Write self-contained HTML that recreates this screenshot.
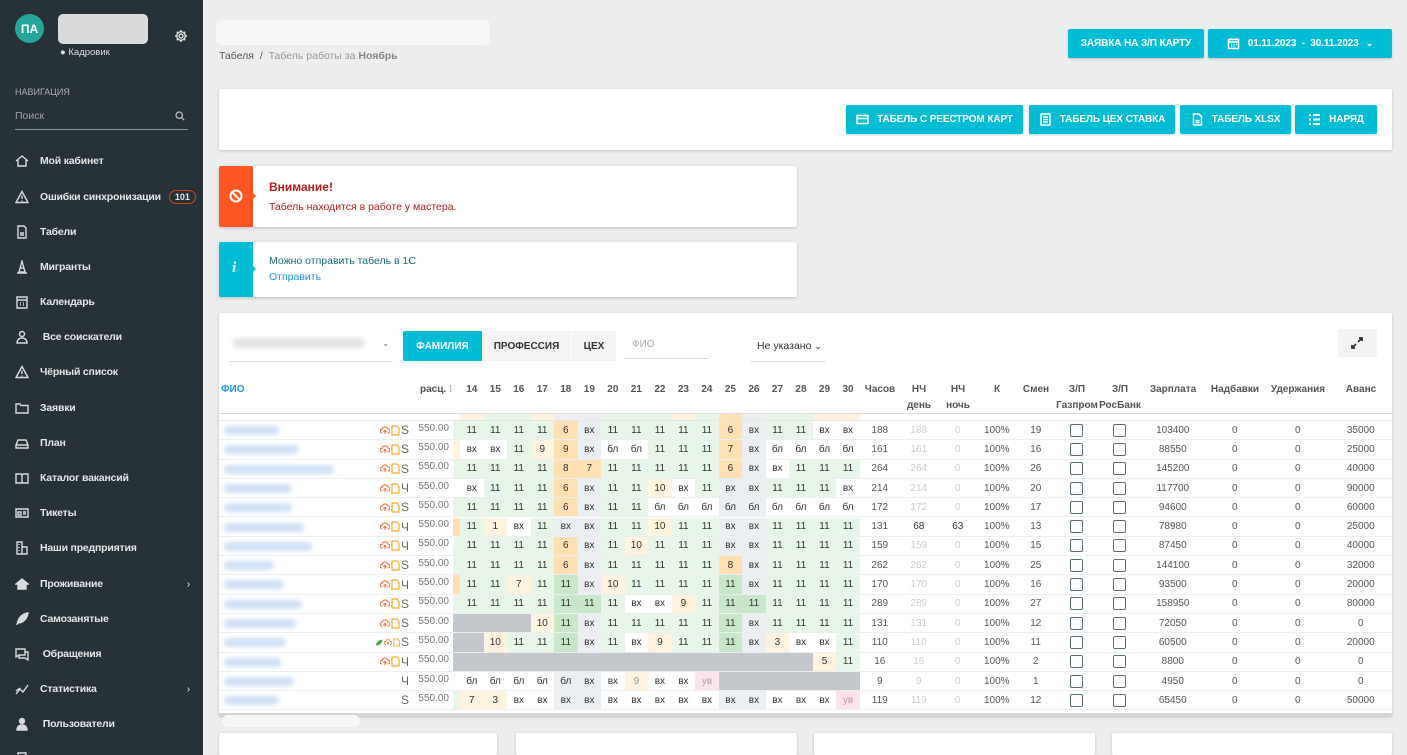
<!DOCTYPE html>
<html><head><meta charset="utf-8">
<style>
*{box-sizing:border-box;margin:0;padding:0}
html{width:1407px;height:755px;overflow:hidden}
body{width:1407px;height:755px;overflow:hidden;background:#eeedee;font-family:"Liberation Sans",sans-serif;position:relative;font-size:11px;color:#333}
.sb{position:absolute;left:0;top:0;width:203px;height:755px;background:#263238;color:#e6e6e6}
.sb .it{position:absolute;left:15px;font-size:10.5px;letter-spacing:-0.2px;white-space:nowrap;font-weight:bold;color:#e4e6e7;display:flex;align-items:center;height:16px}
.sb .it svg{width:14px;height:14px;margin-right:11px;fill:none;stroke:#d8dadb;stroke-width:1.4;flex:none}
.abs{position:absolute}
.btn{position:absolute;background:#00bcd4;color:#fff;font-weight:bold;font-size:10px;letter-spacing:-0.1px;white-space:nowrap;border-radius:2px;display:flex;align-items:center;justify-content:center;box-shadow:0 1px 2px rgba(0,0,0,.2)}
.btn svg{width:13px;height:13px;margin-right:8px;fill:none;stroke:#fff;stroke-width:1.5}
.card{position:absolute;background:#fff;border-radius:2px;box-shadow:0 1px 3px rgba(0,0,0,.2)}
.row{position:absolute;left:219px;width:1173px;height:19.3px;display:flex;align-items:stretch;border-bottom:1px solid #eceeef;font-size:10px}
.row span{display:flex;align-items:center;justify-content:center}
.nm{width:156px;position:relative}
.nm::after{content:"";position:absolute;left:5px;top:5px;height:9px;border-radius:5px;background:#cfe0f5;filter:blur(2px);width:var(--w,60px)}
.ic{width:36px;justify-content:flex-end!important;padding-right:2px;gap:1px}
.rt{width:42px;justify-content:flex-end!important;padding-right:4px;color:#777;position:relative;top:-2px}
.pt{width:7px}
.d{width:23.53px;color:#333}
.g{background:#e8f5e9}.G{background:#c8e6c9}.o{background:#fff3e0}.O{background:#ffe0b2}.w{background:#fff}.s{background:#eceff1}.x{background:#c4c8cd}.p{background:#fce4ec;color:#c49aa6!important}
.c1{width:40px;color:#555}.c2{width:38px;color:#ccc}.c3{width:40px;color:#ccc}.c4{width:38px;color:#555}.c5{width:40px;color:#555}
.c6{width:42px}.c7{width:44px}.c8{width:62px;color:#555}.c9{width:62px;color:#555}.c10{width:64px;color:#555}.c11{width:62px;color:#555}
.cb{width:13px;height:13px;border:1.5px solid #5a6f7c;border-radius:2px;display:block}
.hd{position:absolute;top:382px;font-size:10px;font-weight:bold;color:#555;text-align:center;line-height:16px;white-space:nowrap}
.sic{font-size:12px;color:#666;font-weight:normal}
</style></head><body>

<div class="sb">
  <div class="abs" style="left:15px;top:14px;width:29px;height:29px;border-radius:50%;background:#26a69a;color:#fff;font-weight:bold;font-size:12px;display:flex;align-items:center;justify-content:center">ПА</div>
  <div class="abs" style="left:58px;top:14px;width:90px;height:30px;border-radius:5px;background:#d9dadb"></div>
  <svg class="abs" style="left:174px;top:29px" width="14" height="14" viewBox="0 0 14 14" fill="none" stroke="#e0e0e0" stroke-width="1.4"><circle cx="7" cy="7" r="2"/><path d="M7 1v2M7 11v2M1 7h2M11 7h2M2.8 2.8l1.4 1.4M9.8 9.8l1.4 1.4M2.8 11.2l1.4-1.4M9.8 4.2l1.4-1.4"/><circle cx="7" cy="7" r="4.3"/></svg>
  <div class="abs" style="left:60px;top:47px;font-size:9.5px;color:#ddd">&#9679;&nbsp;Кадровик</div>
  <div class="abs" style="left:15px;top:87px;font-size:9px;color:#aab0b3">НАВИГАЦИЯ</div>
  <div class="abs" style="left:15px;top:110px;font-size:10.5px;color:#9aa1a5">Поиск</div>
  <svg class="abs" style="left:175px;top:111px" width="10" height="10" viewBox="0 0 10 10" fill="none" stroke="#bbb" stroke-width="1.3"><circle cx="4.2" cy="4.2" r="3.2"/><path d="M6.6 6.6l2.6 2.6"/></svg>
  <div class="abs" style="left:15px;top:129px;width:173px;height:1px;background:#8a9296"></div>

  <div class="it" style="top:153px"><svg viewBox="0 0 14 14"><path d="M1 7l6-5 6 5M3 6v6h8V6"/></svg>Мой кабинет</div>
  <div class="it" style="top:189px"><svg viewBox="0 0 14 14"><path d="M7 1.5l6 11H1z M7 5.5v3.5M7 10.5v1"/></svg>Ошибки синхронизации<span style="margin-left:8px;border:1.3px solid #d84315;border-radius:9px;padding:1px 5px;font-size:9px;letter-spacing:0">101</span></div>
  <div class="it" style="top:224px"><svg viewBox="0 0 14 14"><path d="M3 1h6l2 2v10H3z M5 8h4M5 10h4"/></svg>Табели</div>
  <div class="it" style="top:259px"><svg viewBox="0 0 14 14"><path d="M7 1l3 11H4z M2 13h10M5 8h4"/></svg>Мигранты</div>
  <div class="it" style="top:294px"><svg viewBox="0 0 14 14"><path d="M2 2h10v11H2z M2 5h10M5 8h1M8 8h1M5 10h1M8 10h1"/></svg>Календарь</div>
  <div class="it" style="top:329px"><svg viewBox="0 0 14 14"><circle cx="7" cy="4" r="2.5"/><path d="M2 13c0-3 2-5 5-5s5 2 5 5z"/></svg>&nbsp;Все соискатели</div>
  <div class="it" style="top:364px"><svg viewBox="0 0 14 14"><path d="M7 1.5l6 11H1z M7 5.5v3.5M7 10.5v1"/></svg>Чёрный список</div>
  <div class="it" style="top:400px"><svg viewBox="0 0 14 14"><path d="M1 3h4l1 1.5h7V12H1z"/></svg>Заявки</div>
  <div class="it" style="top:435px"><svg viewBox="0 0 14 14"><path d="M1 9l2-5h8l2 5v3H1z M1 9h12"/></svg>План</div>
  <div class="it" style="top:470px"><svg viewBox="0 0 14 14"><path d="M1 3h5l1 1 1-1h5v9H1z M7 4v8"/></svg>Каталог вакансий</div>
  <div class="it" style="top:505px"><svg viewBox="0 0 14 14"><path d="M1 3h12v8H1z M3 6h3v3H3z M8 6h3M8 8h3"/></svg>Тикеты</div>
  <div class="it" style="top:540px"><svg viewBox="0 0 14 14"><path d="M2 1h5v12H2z M7 6h5v7H7z M4 3v1M4 6v1M4 9v1"/></svg>Наши предприятия</div>
  <div class="it" style="top:576px;width:175px"><svg viewBox="0 0 14 14"><path d="M1 7l6-5 6 5z M3 7v5h8V7" fill="#d8dadb"/></svg>Проживание<span style="margin-left:auto;font-weight:normal">›</span></div>
  <div class="it" style="top:611px"><svg viewBox="0 0 14 14"><path d="M2 13C3 6 7 2 13 1 12 7 8 11 3 11" fill="#d8dadb"/></svg>Самозанятые</div>
  <div class="it" style="top:646px"><svg viewBox="0 0 14 14"><path d="M1 2h9v6H4l-3 2z M4 8v3h6l3 2V5h-3"/></svg>&nbsp;Обращения</div>
  <div class="it" style="top:681px;width:175px"><svg viewBox="0 0 14 14"><path d="M1 12l4-5 3 3 5-7M1 9l4-3"/></svg>Статистика<span style="margin-left:auto;font-weight:normal">›</span></div>
  <div class="it" style="top:716px"><svg viewBox="0 0 14 14"><circle cx="7" cy="4" r="2.5" fill="#d8dadb"/><path d="M2 13c0-3 2-5 5-5s5 2 5 5z" fill="#d8dadb"/></svg>&nbsp;Пользователи</div>
  <div class="it" style="top:751px"><svg viewBox="0 0 14 14"><path d="M3 1h8v12H3z"/></svg></div>
</div>

<!-- header -->
<div class="abs" style="left:216px;top:20px;width:274px;height:25px;border-radius:5px;background:#f7f7f7"></div>
<div class="abs" style="left:219px;top:50px;font-size:10.5px;color:#555">Табеля &nbsp;/&nbsp; <span style="color:#999">Табель работы за</span> <b style="color:#888">Ноябрь</b></div>
<div class="btn" style="left:1068px;top:29px;width:136px;height:29px">ЗАЯВКА НА З/П КАРТУ</div>
<div class="btn" style="left:1208px;top:29px;width:184px;height:29px"><svg viewBox="0 0 13 13"><path d="M1.5 2.5h10v9h-10z M1.5 5h10M4 1v2M9 1v2M4 7.5h1M6.5 7.5h1M9 7.5h1M4 9.5h1M6.5 9.5h1"/></svg>01.11.2023 &nbsp;- &nbsp;30.11.2023 <span style="margin-left:7px;font-size:9px">&#8964;</span></div>

<div class="card" style="left:219px;top:89px;width:1173px;height:61px"></div>
<div class="btn" style="left:846px;top:105px;width:177px;height:29px"><svg viewBox="0 0 13 13"><path d="M1 2.5h11v8H1z M1 5.5h11"/></svg>ТАБЕЛЬ С РЕЕСТРОМ КАРТ</div>
<div class="btn" style="left:1029px;top:105px;width:146px;height:29px"><svg viewBox="0 0 13 13"><path d="M2 1h9v11H2z M4 4h5M4 6.5h5M4 9h5"/></svg>ТАБЕЛЬ ЦЕХ СТАВКА</div>
<div class="btn" style="left:1180px;top:105px;width:111px;height:29px"><svg viewBox="0 0 13 13"><path d="M2.5 1h5.5l2.5 2.5V12h-8z M4.5 7.5h4M4.5 9.5h4"/></svg>ТАБЕЛЬ XLSX</div>
<div class="btn" style="left:1295px;top:105px;width:82px;height:29px"><svg viewBox="0 0 13 13"><path d="M1 2h2M1 6.5h2M1 11h2M5 2h7M5 6.5h7M5 11h7" stroke-width="2"/></svg>НАРЯД</div>

<!-- alerts -->
<div class="card" style="left:219px;top:166px;width:578px;height:61px;overflow:hidden">
  <div class="abs" style="left:0;top:0;width:34px;height:61px;background:#ff5722"></div>
  <div class="abs" style="left:33px;top:26px;width:0;height:0;border-top:4px solid transparent;border-bottom:4px solid transparent;border-left:4px solid #ff5722"></div>
  <svg class="abs" style="left:10px;top:23px" width="14" height="14" viewBox="0 0 14 14" fill="none" stroke="#fff" stroke-width="2"><circle cx="7" cy="7" r="5.5"/><path d="M3 3l8 8"/></svg>
  <div class="abs" style="left:50px;top:14px;font-size:12px;font-weight:bold;color:#b71c1c">Внимание!</div>
  <div class="abs" style="left:50px;top:35px;font-size:10.5px;color:#b71c1c">Табель находится в работе у мастера.</div>
</div>
<div class="card" style="left:219px;top:242px;width:578px;height:55px;overflow:hidden">
  <div class="abs" style="left:0;top:0;width:34px;height:55px;background:#00bcd4"></div>
  <div class="abs" style="left:33px;top:23px;width:0;height:0;border-top:4px solid transparent;border-bottom:4px solid transparent;border-left:4px solid #00bcd4"></div>
  <div class="abs" style="left:13px;top:18px;font-size:15px;font-weight:bold;font-style:italic;color:#fff;font-family:'Liberation Serif',serif">i</div>
  <div class="abs" style="left:50px;top:13px;font-size:10.5px;color:#176b72">Можно отправить табель в 1С</div>
  <div class="abs" style="left:50px;top:29px;font-size:10.5px;color:#2196f3">Отправить</div>
</div>

<!-- table card -->
<div class="card" style="left:219px;top:313px;width:1173px;height:403px"></div>
<div class="abs" style="left:233px;top:338px;width:132px;height:10px;border-radius:5px;background:#e3e3e3;filter:blur(2px)"></div>
<div class="abs" style="left:382px;top:338px;font-size:9px;color:#777">&#8964;</div>
<div class="abs" style="left:229px;top:361px;width:162px;height:1px;background:#ddd"></div>
<div class="abs" style="left:403px;top:331px;width:79px;height:30px;background:#00bcd4;color:#fff;font-weight:bold;font-size:10px;display:flex;align-items:center;justify-content:center;border-radius:2px 0 0 2px">ФАМИЛИЯ</div>
<div class="abs" style="left:482px;top:331px;width:89px;height:30px;background:#f4f4f4;color:#333;font-weight:bold;font-size:10px;display:flex;align-items:center;justify-content:center">ПРОФЕССИЯ</div>
<div class="abs" style="left:572px;top:331px;width:44px;height:30px;background:#f4f4f4;color:#333;font-weight:bold;font-size:10px;display:flex;align-items:center;justify-content:center">ЦЕХ</div>
<div class="abs" style="left:632px;top:339px;font-size:10px;color:#aaa">ФИО</div>
<div class="abs" style="left:625px;top:358px;width:84px;height:1px;background:#ddd"></div>
<div class="abs" style="left:757px;top:340px;font-size:10.5px;color:#333">Не указано <span style="font-size:9px">&#8964;</span></div>
<div class="abs" style="left:750px;top:361px;width:76px;height:1px;background:#ddd"></div>
<div class="abs" style="left:1338px;top:329px;width:39px;height:28px;background:#f3f3f3;border-radius:2px"></div>
<svg class="abs" style="left:1350px;top:336px" width="14" height="14" viewBox="0 0 14 14" fill="none" stroke="#333" stroke-width="1.8"><path d="M8 6l4-4M9 2h3v3M6 8l-4 4M2 9v3h3"/></svg>

<!-- header labels -->
<div class="hd" style="left:221px;color:#2196f3">ФИО</div>
<div class="hd" style="left:420px">расц. <span style="color:#aaa">⁝</span></div>
<div class="hd" style="left:460px;width:400px;display:flex"><span style="width:23.53px">14</span><span style="width:23.53px">15</span><span style="width:23.53px">16</span><span style="width:23.53px">17</span><span style="width:23.53px">18</span><span style="width:23.53px">19</span><span style="width:23.53px">20</span><span style="width:23.53px">21</span><span style="width:23.53px">22</span><span style="width:23.53px">23</span><span style="width:23.53px">24</span><span style="width:23.53px">25</span><span style="width:23.53px">26</span><span style="width:23.53px">27</span><span style="width:23.53px">28</span><span style="width:23.53px">29</span><span style="width:23.53px">30</span></div>
<div class="hd" style="left:860px;width:40px">Часов</div>
<div class="hd" style="left:900px;width:38px">НЧ<br>день</div>
<div class="hd" style="left:938px;width:40px">НЧ<br>ночь</div>
<div class="hd" style="left:978px;width:38px">К</div>
<div class="hd" style="left:1016px;width:40px">Смен</div>
<div class="hd" style="left:1056px;width:42px">З/П<br>Газпром</div>
<div class="hd" style="left:1098px;width:44px">З/П<br>РосБанк</div>
<div class="hd" style="left:1142px;width:62px">Зарплата</div>
<div class="hd" style="left:1204px;width:62px">Надбавки</div>
<div class="hd" style="left:1266px;width:64px">Удержания</div>
<div class="hd" style="left:1330px;width:62px">Аванс</div>
<div class="abs" style="left:219px;top:413px;width:1173px;height:1px;background:#ddd"></div>

<!-- partial top row -->
<div class="row" style="top:414px;height:7px;border-bottom:1px solid #e6e6e6">
<span class="nm" style="--w:0"></span><span class="ic"></span><span class="rt"></span><span class="pt"></span>
<span class="d o"></span><span class="d g"></span><span class="d g"></span><span class="d o"></span><span class="d s"></span><span class="d s"></span><span class="d g"></span><span class="d g"></span><span class="d g"></span><span class="d o"></span><span class="d g"></span><span class="d O"></span><span class="d s"></span><span class="d g"></span><span class="d g"></span><span class="d o"></span><span class="d o"></span>
</div>

<div class="row" style="top:421px"><span class="nm" style="--w:55px"></span><span class="ic"><svg width="10" height="9" viewBox="0 0 10 9" fill="none" stroke="#ff7043" stroke-width="1.1"><path d="M2.5 7H2a1.8 1.8 0 010-3.6A3 3 0 017.8 3 1.9 1.9 0 018 7h-.5M5 8V4.5M3.6 5.8L5 4.4l1.4 1.4"/></svg><svg width="9" height="11" viewBox="0 0 9 11" fill="none" stroke="#ffa726" stroke-width="1.2"><path d="M1 1h5l2 2.5V10H1z"/></svg><b class="sic">S</b></span><span class="rt">550.00</span><span class="pt g"></span>
<span class="d g">11</span><span class="d g">11</span><span class="d g">11</span><span class="d g">11</span><span class="d O">6</span><span class="d s">вх</span><span class="d g">11</span><span class="d g">11</span><span class="d g">11</span><span class="d g">11</span><span class="d g">11</span><span class="d O">6</span><span class="d s">вх</span><span class="d g">11</span><span class="d g">11</span><span class="d w">вх</span><span class="d w">вх</span>
<span class="c1">188</span><span class="c2">188</span><span class="c3">0</span><span class="c4">100%</span><span class="c5">19</span><span class="c6"><i class="cb"></i></span><span class="c7"><i class="cb"></i></span><span class="c8">103400</span><span class="c9">0</span><span class="c10">0</span><span class="c11">35000</span></div>

<div class="row" style="top:440.3px"><span class="nm" style="--w:75px"></span><span class="ic"><svg width="10" height="9" viewBox="0 0 10 9" fill="none" stroke="#ff7043" stroke-width="1.1"><path d="M2.5 7H2a1.8 1.8 0 010-3.6A3 3 0 017.8 3 1.9 1.9 0 018 7h-.5M5 8V4.5M3.6 5.8L5 4.4l1.4 1.4"/></svg><svg width="9" height="11" viewBox="0 0 9 11" fill="none" stroke="#ffa726" stroke-width="1.2"><path d="M1 1h5l2 2.5V10H1z"/></svg><b class="sic">S</b></span><span class="rt">550.00</span><span class="pt o"></span>
<span class="d w">вх</span><span class="d w">вх</span><span class="d g">11</span><span class="d o">9</span><span class="d O">9</span><span class="d s">вх</span><span class="d w">бл</span><span class="d w">бл</span><span class="d g">11</span><span class="d g">11</span><span class="d g">11</span><span class="d O">7</span><span class="d s">вх</span><span class="d w">бл</span><span class="d w">бл</span><span class="d w">бл</span><span class="d w">бл</span>
<span class="c1">161</span><span class="c2">161</span><span class="c3">0</span><span class="c4">100%</span><span class="c5">16</span><span class="c6"><i class="cb"></i></span><span class="c7"><i class="cb"></i></span><span class="c8">88550</span><span class="c9">0</span><span class="c10">0</span><span class="c11">25000</span></div>

<div class="row" style="top:459.6px"><span class="nm" style="--w:110px"></span><span class="ic"><svg width="10" height="9" viewBox="0 0 10 9" fill="none" stroke="#ff7043" stroke-width="1.1"><path d="M2.5 7H2a1.8 1.8 0 010-3.6A3 3 0 017.8 3 1.9 1.9 0 018 7h-.5M5 8V4.5M3.6 5.8L5 4.4l1.4 1.4"/></svg><svg width="9" height="11" viewBox="0 0 9 11" fill="none" stroke="#ffa726" stroke-width="1.2"><path d="M1 1h5l2 2.5V10H1z"/></svg><b class="sic">S</b></span><span class="rt">550.00</span><span class="pt g"></span>
<span class="d g">11</span><span class="d g">11</span><span class="d g">11</span><span class="d g">11</span><span class="d O">8</span><span class="d O">7</span><span class="d g">11</span><span class="d g">11</span><span class="d g">11</span><span class="d g">11</span><span class="d g">11</span><span class="d O">6</span><span class="d s">вх</span><span class="d w">вх</span><span class="d g">11</span><span class="d g">11</span><span class="d g">11</span>
<span class="c1">264</span><span class="c2">264</span><span class="c3">0</span><span class="c4">100%</span><span class="c5">26</span><span class="c6"><i class="cb"></i></span><span class="c7"><i class="cb"></i></span><span class="c8">145200</span><span class="c9">0</span><span class="c10">0</span><span class="c11">40000</span></div>

<div class="row" style="top:478.9px"><span class="nm" style="--w:68px"></span><span class="ic"><svg width="10" height="9" viewBox="0 0 10 9" fill="none" stroke="#ff7043" stroke-width="1.1"><path d="M2.5 7H2a1.8 1.8 0 010-3.6A3 3 0 017.8 3 1.9 1.9 0 018 7h-.5M5 8V4.5M3.6 5.8L5 4.4l1.4 1.4"/></svg><svg width="9" height="11" viewBox="0 0 9 11" fill="none" stroke="#ffa726" stroke-width="1.2"><path d="M1 1h5l2 2.5V10H1z"/></svg><b class="sic">Ч</b></span><span class="rt">550.00</span><span class="pt w"></span>
<span class="d w">вх</span><span class="d g">11</span><span class="d g">11</span><span class="d g">11</span><span class="d O">6</span><span class="d s">вх</span><span class="d g">11</span><span class="d g">11</span><span class="d o">10</span><span class="d w">вх</span><span class="d g">11</span><span class="d s">вх</span><span class="d s">вх</span><span class="d g">11</span><span class="d g">11</span><span class="d g">11</span><span class="d w">вх</span>
<span class="c1">214</span><span class="c2">214</span><span class="c3">0</span><span class="c4">100%</span><span class="c5">20</span><span class="c6"><i class="cb"></i></span><span class="c7"><i class="cb"></i></span><span class="c8">117700</span><span class="c9">0</span><span class="c10">0</span><span class="c11">90000</span></div>

<div class="row" style="top:498.2px"><span class="nm" style="--w:68px"></span><span class="ic"><svg width="10" height="9" viewBox="0 0 10 9" fill="none" stroke="#ff7043" stroke-width="1.1"><path d="M2.5 7H2a1.8 1.8 0 010-3.6A3 3 0 017.8 3 1.9 1.9 0 018 7h-.5M5 8V4.5M3.6 5.8L5 4.4l1.4 1.4"/></svg><svg width="9" height="11" viewBox="0 0 9 11" fill="none" stroke="#ffa726" stroke-width="1.2"><path d="M1 1h5l2 2.5V10H1z"/></svg><b class="sic">S</b></span><span class="rt">550.00</span><span class="pt g"></span>
<span class="d g">11</span><span class="d g">11</span><span class="d g">11</span><span class="d g">11</span><span class="d O">6</span><span class="d s">вх</span><span class="d g">11</span><span class="d g">11</span><span class="d w">бл</span><span class="d w">бл</span><span class="d w">бл</span><span class="d s">бл</span><span class="d s">бл</span><span class="d w">бл</span><span class="d w">бл</span><span class="d w">бл</span><span class="d w">бл</span>
<span class="c1">172</span><span class="c2">172</span><span class="c3">0</span><span class="c4">100%</span><span class="c5">17</span><span class="c6"><i class="cb"></i></span><span class="c7"><i class="cb"></i></span><span class="c8">94600</span><span class="c9">0</span><span class="c10">0</span><span class="c11">60000</span></div>

<div class="row" style="top:517.5px"><span class="nm" style="--w:80px"></span><span class="ic"><svg width="10" height="9" viewBox="0 0 10 9" fill="none" stroke="#ff7043" stroke-width="1.1"><path d="M2.5 7H2a1.8 1.8 0 010-3.6A3 3 0 017.8 3 1.9 1.9 0 018 7h-.5M5 8V4.5M3.6 5.8L5 4.4l1.4 1.4"/></svg><svg width="9" height="11" viewBox="0 0 9 11" fill="none" stroke="#ffa726" stroke-width="1.2"><path d="M1 1h5l2 2.5V10H1z"/></svg><b class="sic">Ч</b></span><span class="rt">550.00</span><span class="pt O"></span>
<span class="d g">11</span><span class="d o">1</span><span class="d w">вх</span><span class="d g">11</span><span class="d s">вх</span><span class="d s">вх</span><span class="d g">11</span><span class="d g">11</span><span class="d o">10</span><span class="d g">11</span><span class="d g">11</span><span class="d s">вх</span><span class="d s">вх</span><span class="d g">11</span><span class="d g">11</span><span class="d g">11</span><span class="d g">11</span>
<span class="c1">131</span><span class="c2" style="color:#333">68</span><span class="c3" style="color:#333">63</span><span class="c4">100%</span><span class="c5">13</span><span class="c6"><i class="cb"></i></span><span class="c7"><i class="cb"></i></span><span class="c8">78980</span><span class="c9">0</span><span class="c10">0</span><span class="c11">25000</span></div>

<div class="row" style="top:536.8px"><span class="nm" style="--w:88px"></span><span class="ic"><svg width="10" height="9" viewBox="0 0 10 9" fill="none" stroke="#ff7043" stroke-width="1.1"><path d="M2.5 7H2a1.8 1.8 0 010-3.6A3 3 0 017.8 3 1.9 1.9 0 018 7h-.5M5 8V4.5M3.6 5.8L5 4.4l1.4 1.4"/></svg><svg width="9" height="11" viewBox="0 0 9 11" fill="none" stroke="#ffa726" stroke-width="1.2"><path d="M1 1h5l2 2.5V10H1z"/></svg><b class="sic">Ч</b></span><span class="rt">550.00</span><span class="pt g"></span>
<span class="d g">11</span><span class="d g">11</span><span class="d g">11</span><span class="d g">11</span><span class="d O">6</span><span class="d s">вх</span><span class="d g">11</span><span class="d o">10</span><span class="d g">11</span><span class="d g">11</span><span class="d g">11</span><span class="d s">вх</span><span class="d s">вх</span><span class="d g">11</span><span class="d g">11</span><span class="d g">11</span><span class="d g">11</span>
<span class="c1">159</span><span class="c2">159</span><span class="c3">0</span><span class="c4">100%</span><span class="c5">15</span><span class="c6"><i class="cb"></i></span><span class="c7"><i class="cb"></i></span><span class="c8">87450</span><span class="c9">0</span><span class="c10">0</span><span class="c11">40000</span></div>

<div class="row" style="top:556.1px"><span class="nm" style="--w:50px"></span><span class="ic"><svg width="10" height="9" viewBox="0 0 10 9" fill="none" stroke="#ff7043" stroke-width="1.1"><path d="M2.5 7H2a1.8 1.8 0 010-3.6A3 3 0 017.8 3 1.9 1.9 0 018 7h-.5M5 8V4.5M3.6 5.8L5 4.4l1.4 1.4"/></svg><svg width="9" height="11" viewBox="0 0 9 11" fill="none" stroke="#ffa726" stroke-width="1.2"><path d="M1 1h5l2 2.5V10H1z"/></svg><b class="sic">S</b></span><span class="rt">550.00</span><span class="pt g"></span>
<span class="d g">11</span><span class="d g">11</span><span class="d g">11</span><span class="d g">11</span><span class="d O">6</span><span class="d s">вх</span><span class="d g">11</span><span class="d g">11</span><span class="d g">11</span><span class="d g">11</span><span class="d g">11</span><span class="d O">8</span><span class="d s">вх</span><span class="d g">11</span><span class="d g">11</span><span class="d g">11</span><span class="d g">11</span>
<span class="c1">262</span><span class="c2">262</span><span class="c3">0</span><span class="c4">100%</span><span class="c5">25</span><span class="c6"><i class="cb"></i></span><span class="c7"><i class="cb"></i></span><span class="c8">144100</span><span class="c9">0</span><span class="c10">0</span><span class="c11">32000</span></div>

<div class="row" style="top:575.4px"><span class="nm" style="--w:60px"></span><span class="ic"><svg width="10" height="9" viewBox="0 0 10 9" fill="none" stroke="#ff7043" stroke-width="1.1"><path d="M2.5 7H2a1.8 1.8 0 010-3.6A3 3 0 017.8 3 1.9 1.9 0 018 7h-.5M5 8V4.5M3.6 5.8L5 4.4l1.4 1.4"/></svg><svg width="9" height="11" viewBox="0 0 9 11" fill="none" stroke="#ffa726" stroke-width="1.2"><path d="M1 1h5l2 2.5V10H1z"/></svg><b class="sic">Ч</b></span><span class="rt">550.00</span><span class="pt O"></span>
<span class="d g">11</span><span class="d g">11</span><span class="d o">7</span><span class="d g">11</span><span class="d G">11</span><span class="d s">вх</span><span class="d o">10</span><span class="d g">11</span><span class="d g">11</span><span class="d g">11</span><span class="d g">11</span><span class="d G">11</span><span class="d s">вх</span><span class="d g">11</span><span class="d g">11</span><span class="d g">11</span><span class="d g">11</span>
<span class="c1">170</span><span class="c2">170</span><span class="c3">0</span><span class="c4">100%</span><span class="c5">16</span><span class="c6"><i class="cb"></i></span><span class="c7"><i class="cb"></i></span><span class="c8">93500</span><span class="c9">0</span><span class="c10">0</span><span class="c11">20000</span></div>

<div class="row" style="top:594.7px"><span class="nm" style="--w:78px"></span><span class="ic"><svg width="10" height="9" viewBox="0 0 10 9" fill="none" stroke="#ff7043" stroke-width="1.1"><path d="M2.5 7H2a1.8 1.8 0 010-3.6A3 3 0 017.8 3 1.9 1.9 0 018 7h-.5M5 8V4.5M3.6 5.8L5 4.4l1.4 1.4"/></svg><svg width="9" height="11" viewBox="0 0 9 11" fill="none" stroke="#ffa726" stroke-width="1.2"><path d="M1 1h5l2 2.5V10H1z"/></svg><b class="sic">S</b></span><span class="rt">550.00</span><span class="pt g"></span>
<span class="d g">11</span><span class="d g">11</span><span class="d g">11</span><span class="d g">11</span><span class="d G">11</span><span class="d G">11</span><span class="d g">11</span><span class="d w">вх</span><span class="d w">вх</span><span class="d o">9</span><span class="d g">11</span><span class="d G">11</span><span class="d G">11</span><span class="d g">11</span><span class="d g">11</span><span class="d g">11</span><span class="d g">11</span>
<span class="c1">289</span><span class="c2">289</span><span class="c3">0</span><span class="c4">100%</span><span class="c5">27</span><span class="c6"><i class="cb"></i></span><span class="c7"><i class="cb"></i></span><span class="c8">158950</span><span class="c9">0</span><span class="c10">0</span><span class="c11">80000</span></div>

<div class="row" style="top:614px"><span class="nm" style="--w:72px"></span><span class="ic"><svg width="10" height="9" viewBox="0 0 10 9" fill="none" stroke="#ff7043" stroke-width="1.1"><path d="M2.5 7H2a1.8 1.8 0 010-3.6A3 3 0 017.8 3 1.9 1.9 0 018 7h-.5M5 8V4.5M3.6 5.8L5 4.4l1.4 1.4"/></svg><svg width="9" height="11" viewBox="0 0 9 11" fill="none" stroke="#ffa726" stroke-width="1.2"><path d="M1 1h5l2 2.5V10H1z"/></svg><b class="sic">S</b></span><span class="rt">550.00</span><span class="pt x"></span>
<span class="d x"></span><span class="d x"></span><span class="d x"></span><span class="d o">10</span><span class="d G">11</span><span class="d s">вх</span><span class="d g">11</span><span class="d g">11</span><span class="d g">11</span><span class="d g">11</span><span class="d g">11</span><span class="d G">11</span><span class="d s">вх</span><span class="d g">11</span><span class="d g">11</span><span class="d g">11</span><span class="d g">11</span>
<span class="c1">131</span><span class="c2">131</span><span class="c3">0</span><span class="c4">100%</span><span class="c5">12</span><span class="c6"><i class="cb"></i></span><span class="c7"><i class="cb"></i></span><span class="c8">72050</span><span class="c9">0</span><span class="c10">0</span><span class="c11">0</span></div>

<div class="row" style="top:633.3px"><span class="nm" style="--w:62px"></span><span class="ic"><svg width="10" height="9" viewBox="0 0 10 9"><path d="M1 8C2 4 5 1 9.5 1 9 5 6 8 2 8" fill="#43a047"/></svg><svg width="10" height="9" viewBox="0 0 10 9" fill="none" stroke="#ff7043" stroke-width="1.1"><path d="M2.5 7H2a1.8 1.8 0 010-3.6A3 3 0 017.8 3 1.9 1.9 0 018 7h-.5M5 8V4.5M3.6 5.8L5 4.4l1.4 1.4"/></svg><svg width="9" height="11" viewBox="0 0 9 11" fill="none" stroke="#ffa726" stroke-width="1.2"><path d="M1 1h5l2 2.5V10H1z"/></svg><b class="sic">S</b></span><span class="rt">550.00</span><span class="pt x"></span>
<span class="d x"></span><span class="d o">10</span><span class="d g">11</span><span class="d g">11</span><span class="d G">11</span><span class="d s">вх</span><span class="d g">11</span><span class="d w">вх</span><span class="d o">9</span><span class="d g">11</span><span class="d g">11</span><span class="d G">11</span><span class="d s">вх</span><span class="d o">3</span><span class="d w">вх</span><span class="d w">вх</span><span class="d g">11</span>
<span class="c1">110</span><span class="c2">110</span><span class="c3">0</span><span class="c4">100%</span><span class="c5">11</span><span class="c6"><i class="cb"></i></span><span class="c7"><i class="cb"></i></span><span class="c8">60500</span><span class="c9">0</span><span class="c10">0</span><span class="c11">20000</span></div>

<div class="row" style="top:652.6px"><span class="nm" style="--w:58px"></span><span class="ic"><svg width="10" height="9" viewBox="0 0 10 9" fill="none" stroke="#ff7043" stroke-width="1.1"><path d="M2.5 7H2a1.8 1.8 0 010-3.6A3 3 0 017.8 3 1.9 1.9 0 018 7h-.5M5 8V4.5M3.6 5.8L5 4.4l1.4 1.4"/></svg><svg width="9" height="11" viewBox="0 0 9 11" fill="none" stroke="#ffa726" stroke-width="1.2"><path d="M1 1h5l2 2.5V10H1z"/></svg><b class="sic">Ч</b></span><span class="rt">550.00</span><span class="pt x"></span>
<span class="d x"></span><span class="d x"></span><span class="d x"></span><span class="d x"></span><span class="d x"></span><span class="d x"></span><span class="d x"></span><span class="d x"></span><span class="d x"></span><span class="d x"></span><span class="d x"></span><span class="d x"></span><span class="d x"></span><span class="d x"></span><span class="d x"></span><span class="d o">5</span><span class="d g">11</span>
<span class="c1">16</span><span class="c2">16</span><span class="c3">0</span><span class="c4">100%</span><span class="c5">2</span><span class="c6"><i class="cb"></i></span><span class="c7"><i class="cb"></i></span><span class="c8">8800</span><span class="c9">0</span><span class="c10">0</span><span class="c11">0</span></div>

<div class="row" style="top:671.9px"><span class="nm" style="--w:70px"></span><span class="ic"><b class="sic">Ч</b></span><span class="rt">550.00</span><span class="pt w"></span>
<span class="d w">бл</span><span class="d w">бл</span><span class="d w">бл</span><span class="d w">бл</span><span class="d s">бл</span><span class="d s">вх</span><span class="d w">вх</span><span class="d o" style="color:#999">9</span><span class="d w">вх</span><span class="d w">вх</span><span class="d p">ув</span><span class="d x"></span><span class="d x"></span><span class="d x"></span><span class="d x"></span><span class="d x"></span><span class="d x"></span>
<span class="c1">9</span><span class="c2">9</span><span class="c3">0</span><span class="c4">100%</span><span class="c5">1</span><span class="c6"><i class="cb"></i></span><span class="c7"><i class="cb"></i></span><span class="c8">4950</span><span class="c9">0</span><span class="c10">0</span><span class="c11">0</span></div>

<div class="row" style="top:691.2px"><span class="nm" style="--w:55px"></span><span class="ic"><b class="sic">S</b></span><span class="rt">550.00</span><span class="pt g"></span>
<span class="d o">7</span><span class="d o">3</span><span class="d w">вх</span><span class="d w">вх</span><span class="d s">вх</span><span class="d s">вх</span><span class="d w">вх</span><span class="d w">вх</span><span class="d w">вх</span><span class="d w">вх</span><span class="d w">вх</span><span class="d s">вх</span><span class="d s">вх</span><span class="d w">вх</span><span class="d w">вх</span><span class="d w">вх</span><span class="d p">ув</span>
<span class="c1">119</span><span class="c2">119</span><span class="c3">0</span><span class="c4">100%</span><span class="c5">12</span><span class="c6"><i class="cb"></i></span><span class="c7"><i class="cb"></i></span><span class="c8">65450</span><span class="c9">0</span><span class="c10">0</span><span class="c11">50000</span></div>

<div class="abs" style="left:219px;top:713px;width:1173px;height:3px;background:#d5d5d5"></div>
<div class="abs" style="left:222px;top:715px;width:138px;height:12px;border-radius:6px;background:#f7f7f7"></div>

<!-- bottom cards -->
<div class="card" style="left:219px;top:733px;width:278px;height:22px"></div>
<div class="card" style="left:516px;top:733px;width:281px;height:22px"></div>
<div class="card" style="left:814px;top:733px;width:281px;height:22px"></div>
<div class="card" style="left:1112px;top:733px;width:280px;height:22px"></div>
</body></html>
